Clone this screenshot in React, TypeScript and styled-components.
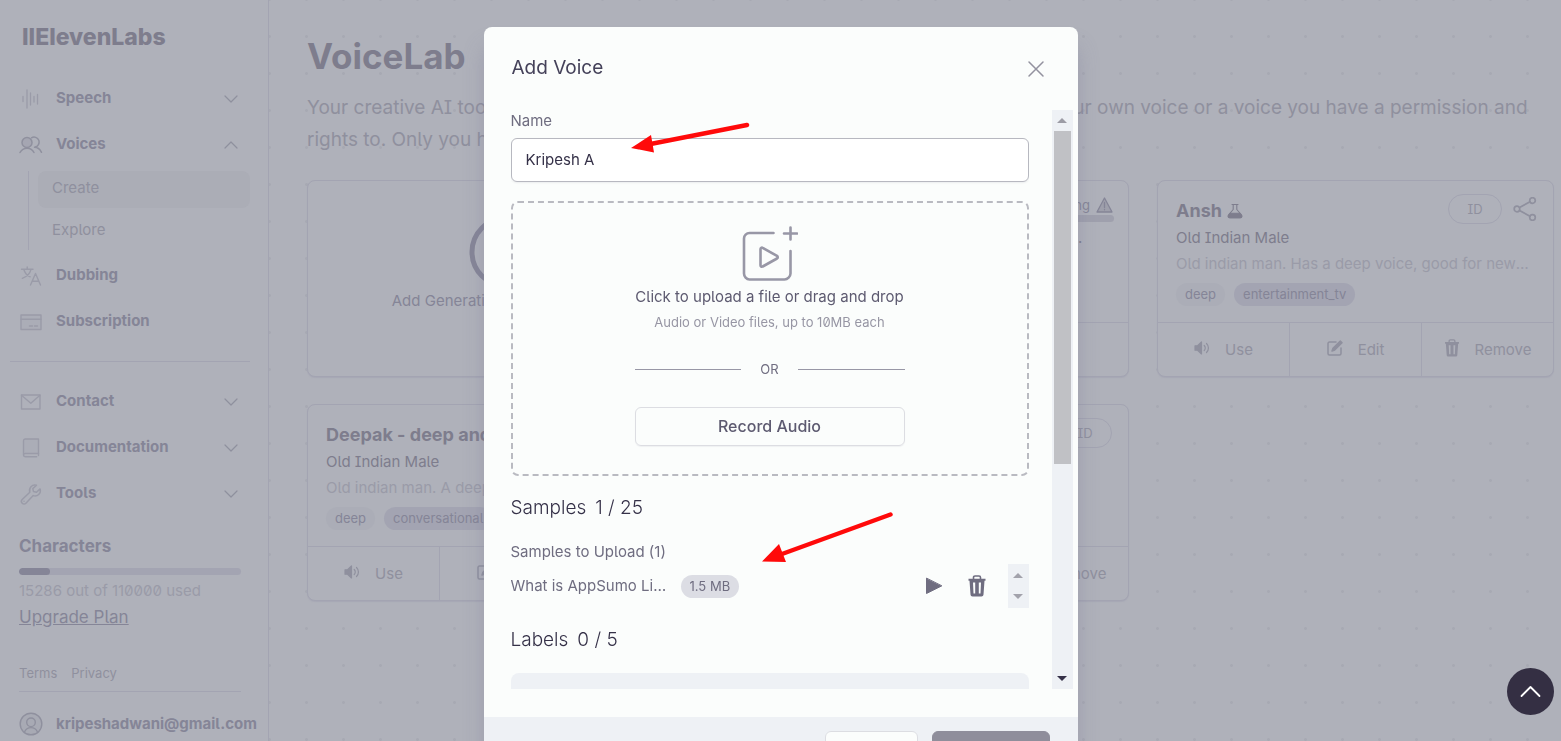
import React from 'react';
import styled, { createGlobalStyle, css } from 'styled-components';

const c = {
  page: '#afb1ba',
  line: '#a3a4b2',
  strong: '#7e7d8d',
  text: '#858597',
  muted: '#8f909e',
  faint: '#9a9ba8',
  surface: '#fbfdfc',
  ink: '#353148',
  label: '#6f6d80',
};

const GlobalStyle = createGlobalStyle`
  *, *::before, *::after { box-sizing: border-box; }
  html, body { margin: 0; background: ${c.page}; }
  body {
    font: 400 15px/20px Inter, 'Liberation Sans', sans-serif;
    font-feature-settings: 'cv05', 'cv08', 'zero';
    color: ${c.text};
    overflow: hidden;
  }
  button, input { font: inherit; font-feature-settings: inherit; color: inherit; margin: 0; }
  button { background: none; border: 0; padding: 0; cursor: pointer; }
  h1, h2, h3, p, ul { margin: 0; padding: 0; font-weight: 400; }
  ul { list-style: none; }
  a { color: inherit; text-decoration: none; }
  svg { display: block; flex: none; }
`;

const plain = css`font-feature-settings: normal;`;

/* ---------- page shell ---------- */
const Shell = styled.div`
  display: grid;
  grid-template-columns: 269px minmax(0, 1fr);
  min-height: 100vh;
`;
const Sidebar = styled.aside`
  border-right: 1px solid ${c.line};
  padding: 21px 9px 0 19px;
  display: flex;
  flex-direction: column;
`;
const Logo = styled.a`
  ${plain}
  font-size: 23px;
  line-height: 32px;
  font-weight: 800;
  color: ${c.strong};
  margin: 0 0 22px 3px;
`;
const NavButton = styled.button`
  display: grid;
  grid-template-columns: 24px 1fr 14px;
  column-gap: 13px;
  align-items: center;
  width: calc(100% - 21px);
  height: 46px;
  font-weight: 700;
  text-align: left;
  svg { margin-top: 2px; color: ${c.muted}; }
  svg:first-child { color: ${c.faint}; }
`;
const SubNav = styled.ul`
  display: grid;
  row-gap: 5px;
  margin: 4px 9px 2px;
  padding-left: 9px;
  border-left: 1px solid ${c.line};
`;
const SubLink = styled.a<{ $active?: boolean }>`
  display: block;
  height: 37px;
  padding: 7px 14px;
  border-radius: 8px;
  color: ${c.muted};
  background: ${p => (p.$active ? '#abadb6' : 'transparent')};
`;
const NavRule = styled.hr`
  width: 240px;
  margin: 17px 0 16px -9px;
  border: 0;
  border-top: 1px solid ${c.line};
`;
const Usage = styled.section`
  display: flex;
  flex-direction: column;
  align-items: flex-start;
  margin-top: 18px;
`;
const UsageTitle = styled.h2`
  font-size: 17px;
  line-height: 24px;
  font-weight: 700;
`;
const Meter = styled.div`
  width: 222px;
  height: 7px;
  margin: 10px 0 6px;
  border-radius: 4px;
  background: ${c.line};
  overflow: hidden;
`;
const MeterFill = styled.div`
  width: 14%;
  height: 100%;
  border-radius: 4px;
  background: ${c.text};
`;
const UsageCount = styled.p`color: ${c.faint};`;
const Upgrade = styled.a`
  font-size: 17px;
  line-height: 32px;
  text-decoration: underline;
`;
const Legal = styled.nav`
  display: flex;
  gap: 14px;
  width: 222px;
  margin-top: 30px;
  padding-bottom: 8px;
  border-bottom: 1px solid ${c.line};
  font-size: 13px;
  color: ${c.muted};
`;
const Account = styled.button`
  display: flex;
  align-items: center;
  gap: 13px;
  height: 48px;
  margin-top: 8px;
  font-weight: 700;
  svg { color: ${c.muted}; }
`;

/* ---------- main ---------- */
const Main = styled.main`
  padding: 32px 7px 0 38px;
  background-image: radial-gradient(circle at center, #a7a9b3 1px, transparent 2px);
  background-size: 37px 37px;
  background-position: -18px 18px;
`;
const PageTitle = styled.h1`
  ${plain}
  font-size: 35px;
  line-height: 48px;
  font-weight: 700;
  color: ${c.strong};
`;
const Lead = styled.p`
  margin: 12px 0 24px;
  font-size: 19px;
  line-height: 32px;
  color: ${c.muted};
`;
const Cards = styled.div`
  display: grid;
  grid-template-columns: repeat(3, minmax(0, 1fr));
  gap: 27px 28px;
`;
const Card = styled.article`
  display: flex;
  flex-direction: column;
  height: 197px;
  border: 1px solid ${c.line};
  border-radius: 8px;
  background: ${c.page};
  box-shadow: 0 1px 1px #a7a8b5;
`;
const AddCard = styled(Card).attrs({ as: 'button' })`
  align-items: center;
  justify-content: center;
  gap: 2px;
  padding-bottom: 32px;
  color: ${c.text};
`;
const CardBody = styled.div`
  flex: 1;
  padding: 13px 16px 0 18px;
`;
const CardHead = styled.header`
  display: flex;
  justify-content: space-between;
  align-items: flex-end;
  height: 30px;
  margin-bottom: 1px;
`;
const CardTitle = styled.h3`
  ${plain}
  display: flex;
  align-items: center;
  gap: 5px;
  font-size: 18px;
  line-height: 26px;
  font-weight: 700;
  color: ${c.strong};
  white-space: nowrap;
`;
const CardActions = styled.div`
  display: flex;
  align-items: center;
  gap: 11px;
  color: ${c.muted};
`;
const IdButton = styled.button`
  width: 54px;
  height: 30px;
  border: 1px solid ${c.line};
  border-radius: 15px;
  font-size: 13px;
`;
const CardText = styled.p<{ $faint?: boolean }>`
  line-height: 26px;
  margin-right: 3px;
  color: ${p => (p.$faint ? c.faint : c.strong)};
  overflow: hidden;
  text-overflow: ellipsis;
  white-space: nowrap;
`;
const Tags = styled.div`
  display: flex;
  gap: 9px;
  margin-top: 6px;
`;
const Tag = styled.span<{ $filled?: boolean }>`
  height: 23px;
  padding: 0 9px;
  border-radius: 12px;
  font-size: 13px;
  line-height: 22px;
  background: ${p => (p.$filled ? c.line : '#abadb7')};
`;
const CardFoot = styled.footer`
  display: flex;
  height: 54px;
  border-top: 1px solid ${c.line};
`;
const FootButton = styled.button`
  flex: 1;
  display: flex;
  align-items: center;
  justify-content: center;
  gap: 15px;
  color: ${c.muted};
  & + & { border-left: 1px solid ${c.line}; }
  svg { margin-bottom: 3px; }
`;
const Tuning = styled.div`
  width: 150px;
  height: 28px;
  font-size: 13px;
  align-self: flex-start;
  margin-right: -2px;
`;
const TuningLabel = styled.div`
  display: flex;
  justify-content: flex-end;
  align-items: center;
  gap: 6px;
  height: 21px;
  padding-right: 1px;
`;
const TuningBar = styled.div`
  height: 7px;
  border-radius: 4px;
  background: #9fa0ad;
`;

/* ---------- dialog ---------- */
const Overlay = styled.div`
  position: fixed;
  inset: 0;
  overflow: hidden;
  display: flex;
  justify-content: center;
  align-items: flex-start;
  padding-top: 27px;
`;
const Dialog = styled.section`
  position: relative;
  width: 594px;
  border-radius: 8px;
  background: ${c.surface};
  color: ${c.label};
  box-shadow: 0 20px 20px rgba(120, 120, 150, 0.35);
`;
const DialogHead = styled.header`
  display: flex;
  justify-content: space-between;
  align-items: center;
  height: 83px;
  padding: 0 33px 0 28px;
`;
const DialogTitle = styled.h2`
  font-size: 19px;
  line-height: 28px;
  padding-bottom: 2px;
  color: #45425a;
`;
const CloseButton = styled.button`color: #93929f;`;
const DialogBody = styled.div`
  display: flex;
  justify-content: space-between;
  height: calc(100vh - 162px);
  padding: 0 5px 0 27px;
`;
const Form = styled.form`
  width: 518px;
  height: 100%;
  overflow: hidden;
`;
const Field = styled.label`
  display: block;
  line-height: 21px;
`;
const NameInput = styled.input`
  display: block;
  width: 100%;
  height: 44px;
  margin-top: 7px;
  padding: 0 14px 1px;
  border: 1px solid #b7b8c0;
  border-radius: 6px;
  background: #fff;
  color: ${c.ink};
  box-shadow: 0 1px 2px rgba(50, 50, 80, 0.08);
  outline: none;
`;
const DropZone = styled.div`
  display: flex;
  flex-direction: column;
  align-items: center;
  height: 275px;
  margin-top: 19px;
  padding-top: 23px;
  border: 2px dashed #b9bac1;
  border-radius: 7px;
  > svg { color: #9897a6; }
`;
const DropTitle = styled.p`
  margin-top: 4px;
  line-height: 22px;
  color: #5d5a70;
`;
const DropHint = styled.p`
  margin-top: 4px;
  font-size: 13px;
  color: #9796a4;
`;
const Divider = styled.div`
  display: grid;
  grid-template-columns: 1fr auto 1fr;
  align-items: center;
  column-gap: 19px;
  width: 270px;
  margin: 27px 0 28px;
  font-size: 13px;
  &::before, &::after { content: ''; height: 1px; background: #9897a6; }
`;
const RecordButton = styled.button`
  width: 270px;
  height: 39px;
  padding-bottom: 1px;
  border: 1px solid #dcdde2;
  border-radius: 6px;
  font-size: 16px;
  font-weight: 500;
  color: #5d5a70;
  box-shadow: 0 1px 1px rgba(50, 50, 80, 0.06);
`;
const GroupTitle = styled.h3`
  ${plain}
  display: flex;
  gap: 9px;
  margin-top: 18px;
  font-size: 19px;
  line-height: 28px;
  font-weight: 300;
  color: ${c.ink};
`;
const SampleCaption = styled.p`
  margin-top: 20px;
  line-height: 20px;
`;
const SampleRow = styled.div`
  display: flex;
  align-items: center;
  height: 44px;
  margin-top: 2px;
`;
const SampleName = styled.span`
  width: 158px;
  margin-right: 12px;
  overflow: hidden;
  text-overflow: ellipsis;
  white-space: nowrap;
`;
const Size = styled.span`
  padding: 0 9px;
  border-radius: 12px;
  background: #dcdde4;
  font-size: 13px;
  line-height: 23px;
`;
const SampleTools = styled.div`
  display: flex;
  align-items: center;
  gap: 22px;
  margin-left: auto;
`;
const MiniScroll = styled.div`
  display: flex;
  flex-direction: column;
  justify-content: space-between;
  align-items: center;
  width: 21px;
  height: 44px;
  padding: 9px 0;
  background: #eef1f5;
  color: #a2a2ab;
`;
const LabelsBox = styled.div`
  height: 60px;
  margin-top: 19px;
  border-radius: 8px;
  background: #eef1f5;
`;
const ScrollTrack = styled.div`
  display: flex;
  flex-direction: column;
  align-items: center;
  width: 21px;
  background: #eef1f5;
`;
const ScrollArrow = styled.button<{ $off?: boolean }>`
  display: grid;
  place-items: center;
  height: 21px;
  width: 21px;
  color: ${p => (p.$off ? '#9c9ca5' : '#353148')};
`;
const ScrollRun = styled.div`
  flex: 1;
  width: 17px;
`;
const ScrollThumb = styled.div`
  height: 62%;
  background: #c0c1c5;
`;
const DialogFoot = styled.footer`
  display: flex;
  justify-content: flex-end;
  gap: 14px;
  margin-top: 28px;
  padding: 14px 28px;
  background: #eef1f5;
  border-radius: 0 0 8px 8px;
`;
const FootAction = styled.button<{ $primary?: boolean }>`
  width: ${p => (p.$primary ? 118 : 93)}px;
  height: 39px;
  border-radius: 6px;
  border: 1px solid ${p => (p.$primary ? '#8f8e9b' : '#dcdde2')};
  background: ${p => (p.$primary ? '#8f8e9b' : c.surface)};
  color: ${p => (p.$primary ? '#fff' : c.label)};
`;
const Arrows = styled.svg`
  position: absolute;
  left: 0;
  top: 0;
  pointer-events: none;
`;
const TopButton = styled.button`
  position: fixed;
  right: 7px;
  bottom: 26px;
  display: grid;
  place-items: center;
  width: 47px;
  height: 47px;
  border-radius: 50%;
  background: #342f43;
  color: #fff;
`;

/* ---------- icons ---------- */
type IconProps = { w?: number; h?: number; box?: string; sw?: number; fill?: string; children: React.ReactNode };
const Icon = ({ w = 24, h = 24, box = '0 0 24 24', sw = 1, fill = 'none', children }: IconProps) => (
  <svg width={w} height={h} viewBox={box} fill={fill} stroke="currentColor" strokeWidth={sw}
    strokeLinecap="round" strokeLinejoin="round" aria-hidden="true">{children}</svg>
);
const Chevron = ({ up, big }: { up?: boolean; big?: boolean }) => (
  <Icon w={big ? 21 : 14} h={big ? 21 : 14} box="0 0 14 14" sw={1.2}>
    <path d={up ? 'M1 10l6-6 6 6' : 'M1 4l6 6 6-6'} />
  </Icon>
);
const Wave = () => (
  <Icon sw={1.3}><path d="M4 9.500v5M8 3v18M11.500 6v12M15 9.500v5.500M18.500 7.500v9.500" /></Icon>
);
const People = () => (
  <Icon sw={1.5}>
    <g stroke={c.muted}>
      <circle cx="8" cy="9.500" r="5" fill="#a5a6b2" />
      <path d="M1 19.500c3-5.500 11-6 14 0M12.500 4.800a5 5 0 1 1 3.500 9.200M15.500 14.300c3 0 5.500 2 7 5" />
    </g>
  </Icon>
);
const Translate = () => (
  <Icon sw={1.4}>
    <path d="M2.500 5.300h11.500M8.200 3v2.300M12 5.300c-1 4-4.500 7.500-8.700 9M4.700 5.300c1.200 4 3.800 6.500 6.500 7.500M11.500 21l5-11.500 5 11.500M13.200 17.300h6.700" />
  </Icon>
);
const CreditCard = () => (
  <Icon sw={1.4}>
    <rect x="2" y="5" width="20" height="14.500" fill="#abadb7" />
    <path d="M2 9.300h20M10.500 16h3M15.500 16h3" />
  </Icon>
);
const Mail = () => (
  <Icon sw={1.4}><rect x="2.500" y="5" width="18.500" height="14" /><path d="M2.500 5.300l9.300 8 9.200-8" /></Icon>
);
const Book = () => (
  <Icon sw={1.4}>
    <path d="M4.500 19V4.800c0-1 .6-1.800 1.600-1.800h13.400v14.500H6.200c-1 0-1.700.7-1.700 1.600s.7 1.700 1.700 1.700h11.500" fill="#abadb7" />
    <path d="M19.500 17.500v2" />
  </Icon>
);
const Wrench = () => (
  <Icon sw={1.5}>
    <path d="M17.500 3.300c-4.500-1.300-8 2.700-6.700 6.900l-7.600 7.300a2.600 2.600 0 0 0 3.700 3.700l7.300-7.600c4.200 1.300 8.200-2.200 6.900-6.700l-3.600 3.400-3-.7-.7-3z" />
    <path d="M5 19.300h.01" />
  </Icon>
);
const UserCircle = () => (
  <Icon sw={1.4}>
    <circle cx="12" cy="12" r="10.800" fill="#a8aab4" /><circle cx="12" cy="10.300" r="4.300" /><path d="M5.500 20a7 7 0 0 1 13 0" />
  </Icon>
);
const Flask = () => (
  <Icon w={16} h={16} box="0 0 16 16" sw={1.1}>
    <path d="M5 1.500h6M6.200 1.500v5L1.500 12c-.8 1.300-.2 2.800 1.300 2.800h10.400c1.500 0 2.100-1.500 1.300-2.800L9.800 6.500v-5" />
    <path d="M3 10.300h10l1.500 2c.6 1.300 0 2.500-1.300 2.500H2.800c-1.300 0-1.900-1.200-1.300-2.500z" fill="currentColor" />
  </Icon>
);
const Share = () => (
  <Icon sw={1.7}>
    <circle cx="19.500" cy="3.500" r="2.800" /><circle cx="4" cy="12" r="2.800" /><circle cx="19.500" cy="20.500" r="2.800" />
    <path d="M6.500 10.500l10.500-5.700M6.500 13.500l10.500 5.700" />
  </Icon>
);
const Volume = () => (
  <Icon w={16} h={16} box="0 0 16 16" sw={1.2}>
    <path d="M1 5.800h2.500L7.500 2v12L3.500 10.200H1z" fill="currentColor" />
    <path d="M10.200 5.500a3.500 3.500 0 0 1 0 5M12.500 3.500a6.200 6.200 0 0 1 0 9" />
  </Icon>
);
const Pencil = () => (
  <Icon w={16} h={16} box="0 0 16 16" sw={1.5}>
    <path d="M9 2H2.500C1.600 2 1 2.600 1 3.500v10c0 .9.600 1.500 1.500 1.500h10c.9 0 1.500-.6 1.500-1.500V8" />
    <path d="M13.300 1l1.700 1.700-7.300 7.300-2.700 1 1-2.700z" fill="currentColor" />
  </Icon>
);
const Trash = ({ w = 16, h = 18 }: { w?: number; h?: number }) => (
  <svg width={w} height={h} viewBox="0 0 18 22" aria-hidden="true">
    <path d="M5.500 4V2.500C5.500 1.600 6.100 1 7 1h4c.9 0 1.500.6 1.500 1.500V4" fill="none" stroke="currentColor" strokeWidth="1.600" />
    <path d="M.5 3.700h17v2.100h-1l-1 13.700c-.1 1.200-.9 2-2 2h-9c-1.100 0-1.900-.8-2-2L1.500 5.800h-1zM5 7.500l.5 11h1.700V7.500zm5.800 0v11h1.700l.5-11z"
      fill="currentColor" fillRule="evenodd" />
  </svg>
);
const Warning = () => (
  <Icon w={17} h={16} box="0 0 17 16" sw={1.300}>
    <path d="M8.500 1L16 15H1z" fill="#9e9fab" /><path d="M8.500 5.500v5M8.500 12.500v.3" />
  </Icon>
);
const Caret = ({ up }: { up?: boolean }) => (
  <svg width="10" height="5" viewBox="0 0 10 5" fill="currentColor" aria-hidden="true">
    <path d={up ? 'M0 5l5-5 5 5z' : 'M0 0l5 5 5-5z'} />
  </svg>
);
const PlusCircle = () => (
  <Icon w={74} h={74} box="0 0 74 74" sw={5}><circle cx="37" cy="37" r="34" /><path d="M37 22v30M22 37h30" /></Icon>
);
const UploadIcon = () => (
  <Icon w={56} h={56} box="0 0 56 56" sw={2.6}>
    <path d="M31.500 7H7.500C4.500 7 2 9.500 2 12.500v35C2 50.500 4.500 53.500 7.500 53.500h35c3 0 6-3 6-6V25" />
    <path d="M48.500 1.500v12M42 7.500h13" />
    <path d="M18.500 23.200c0-1.200 1.200-1.900 2.200-1.300l14.300 8c1 .6 1 2 0 2.600l-14.300 8c-1 .6-2.200-.1-2.200-1.300z" />
  </Icon>
);

const CardFooter = () => (
  <CardFoot>
    <FootButton><Volume />Use</FootButton>
    <FootButton><Pencil />Edit</FootButton>
    <FootButton><Trash />Remove</FootButton>
  </CardFoot>
);

type VoiceProps = { name: string; kind: string; about: string; tags: string[]; share?: boolean; lab?: boolean };
const VoiceCard = ({ name, kind, about, tags, share, lab }: VoiceProps) => (
  <Card>
    <CardBody>
      <CardHead>
        <CardTitle>{name}{lab && <Flask />}</CardTitle>
        <CardActions><IdButton>ID</IdButton>{share && <Share />}</CardActions>
      </CardHead>
      <CardText>{kind}</CardText>
      <CardText $faint>{about}</CardText>
      <Tags>{tags.map((t, i) => <Tag key={t} $filled={i > 0}>{t}</Tag>)}</Tags>
    </CardBody>
    <CardFooter />
  </Card>
);

const Nav = ({ icon, label, open, leaf }: { icon: React.ReactNode; label: string; open?: boolean; leaf?: boolean }) => (
  <NavButton>{icon}<span>{label}</span>{!leaf && <Chevron up={open} />}</NavButton>
);

export default function App() {
  return (
    <>
      <GlobalStyle />
      <Shell>
        <Sidebar>
          <Logo href="#">IIElevenLabs</Logo>
          <Nav icon={<Wave />} label="Speech" />
          <Nav icon={<People />} label="Voices" open />
          <SubNav>
            <li><SubLink href="#create" $active>Create</SubLink></li>
            <li><SubLink href="#explore">Explore</SubLink></li>
          </SubNav>
          <Nav icon={<Translate />} label="Dubbing" leaf />
          <Nav icon={<CreditCard />} label="Subscription" leaf />
          <NavRule />
          <Nav icon={<Mail />} label="Contact" />
          <Nav icon={<Book />} label="Documentation" />
          <Nav icon={<Wrench />} label="Tools" />
          <Usage>
            <UsageTitle>Characters</UsageTitle>
            <Meter><MeterFill /></Meter>
            <UsageCount>15286 out of 110000 used</UsageCount>
            <Upgrade href="#plan">Upgrade Plan</Upgrade>
          </Usage>
          <Legal><a href="#terms">Terms</a><a href="#privacy">Privacy</a></Legal>
          <Account><UserCircle />kripeshadwani@gmail.com</Account>
        </Sidebar>
        <Main>
          <PageTitle>VoiceLab</PageTitle>
          <Lead>
            Your creative AI toolbox. Design entirely new synthetic voices from scratch. Clone your own voice or a voice you have a permission and
            rights to. Only you have access to the voices you create.
          </Lead>
          <Cards>
            <AddCard><PlusCircle />Add Generative or Cloned Voice</AddCard>
            <Card>
              <CardBody>
                <CardHead>
                  <CardTitle>Kripesh</CardTitle>
                  <Tuning><TuningLabel>Fine-tuning<Warning /></TuningLabel><TuningBar /></Tuning>
                </CardHead>
                <CardText>This voice is a clone made from recorded sets.</CardText>
              </CardBody>
              <CardFoot><FootButton>Verify</FootButton></CardFoot>
            </Card>
            <VoiceCard name="Ansh" lab share kind="Old Indian Male" about="Old indian man. Has a deep voice, good for news reading" tags={['deep', 'entertainment_tv']} />
            <VoiceCard name="Deepak - deep and calm" kind="Old Indian Male" about="Old indian man. A deep voice for narration" tags={['deep', 'conversational']} />
            <VoiceCard name="Ravi" kind="Indian Male" about="A calm voice" tags={['calm']} />
          </Cards>
        </Main>
      </Shell>
      <Overlay>
        <Dialog role="dialog" aria-label="Add Voice">
          <DialogHead>
            <DialogTitle>Add Voice</DialogTitle>
            <CloseButton aria-label="Close">
              <Icon w={18} h={18} box="0 0 18 18" sw={1.500}><path d="M2 2l14 14M16 2L2 16" /></Icon>
            </CloseButton>
          </DialogHead>
          <DialogBody>
            <Form>
              <Field>Name<NameInput type="text" defaultValue="Kripesh A" /></Field>
              <DropZone>
                <UploadIcon />
                <DropTitle>Click to upload a file or drag and drop</DropTitle>
                <DropHint>Audio or Video files, up to 10MB each</DropHint>
                <Divider>OR</Divider>
                <RecordButton type="button">Record Audio</RecordButton>
              </DropZone>
              <GroupTitle>Samples <span>1 / 25</span></GroupTitle>
              <SampleCaption>Samples to Upload (1)</SampleCaption>
              <SampleRow>
                <SampleName>What is AppSumo Lifetime Deal</SampleName>
                <Size>1.5 MB</Size>
                <SampleTools>
                  <button type="button" aria-label="Play">
                    <Icon w={22} h={18} box="0 0 22 18" fill="currentColor"><path d="M2.500 1.500v15L17.500 9z" /></Icon>
                  </button>
                  <button type="button" aria-label="Delete"><Trash w={18} h={22} /></button>
                  <MiniScroll><Caret up /><Caret /></MiniScroll>
                </SampleTools>
              </SampleRow>
              <GroupTitle>Labels <span>0 / 5</span></GroupTitle>
              <LabelsBox />
            </Form>
            <ScrollTrack>
              <ScrollArrow $off aria-label="Scroll up"><Caret up /></ScrollArrow>
              <ScrollRun><ScrollThumb /></ScrollRun>
              <ScrollArrow aria-label="Scroll down"><Caret /></ScrollArrow>
            </ScrollTrack>
          </DialogBody>
          <DialogFoot>
            <FootAction>Cancel</FootAction>
            <FootAction $primary>Add Voice</FootAction>
          </DialogFoot>
          <Arrows width="594" height="600" viewBox="0 0 594 600" fill="#ff0a0a" stroke="#ff0a0a" aria-hidden="true">
            <path d="M263 98L164 117.500M406.500 487.500L298 527" strokeWidth="4.500" strokeLinecap="round" fill="none" />
            <path d="M147 121l20-13 3 17.500zM278 534.500l17-17.500 7 18z" stroke="none" />
          </Arrows>
        </Dialog>
      </Overlay>
      <TopButton aria-label="Back to top"><Chevron up big /></TopButton>
    </>
  );
}
